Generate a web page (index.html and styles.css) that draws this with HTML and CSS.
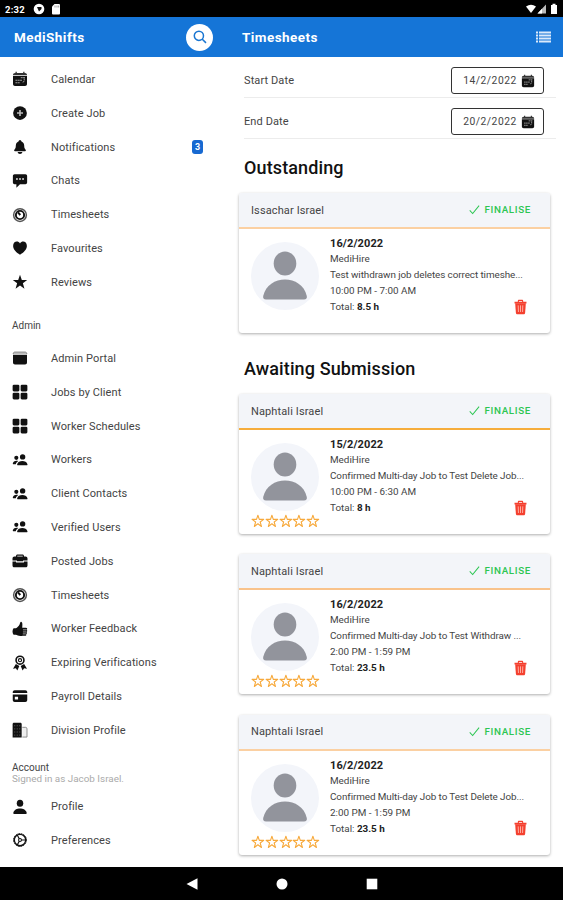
FILE: index.html
```
<!DOCTYPE html>
<html lang="en">
<head>
    <meta charset="utf-8">
    <title>MediShifts - Timesheets</title>
    <link rel="stylesheet" href="styles.css">
</head>
<body>

<!-- Shared icons -->
<svg class="sprite" viewBox="0 0 512 512">
    <symbol id="calendar" viewBox="0 0 512 512">
        <path d="M112 24h42v36h204V24h42v36h16c36 0 64 26 64 60v16H32v-16c0-34 28-60 64-60h16z" fill="#333"/>
        <path d="M32 156h448v260c0 36-28 64-64 64H96c-36 0-64-28-64-64z"/>
        <path d="M280 214h140M110 296h220M110 376h150M390 240v60q0 60-60 60" fill="none" stroke="#aaa" stroke-width="30" stroke-dasharray="62 12"/>
    </symbol>
    <symbol id="add" viewBox="0 0 512 512">
        <circle cx="256" cy="256" r="220"/>
        <path d="M256 160v192M160 256h192" stroke="#bbb" stroke-width="52"/>
    </symbol>
    <symbol id="bell" viewBox="0 0 512 512">
        <path d="M440 350c-30-36-50-54-50-140 0-78-40-106-74-120-5-2-9-6-10-10-7-22-26-48-50-48s-43 26-50 48c-1 4-5 8-10 10-34 14-74 42-74 120 0 86-20 104-50 140-12 16-1 38 20 38h328c21 0 32-22 20-38zM180 416h152c-4 80-148 80-152 0z"/>
    </symbol>
    <symbol id="chat" viewBox="0 0 512 512">
        <path fill-rule="evenodd" d="M80 40h352c28 0 52 24 52 52v212c0 28-24 52-52 52H256L140 472V356H80c-28 0-52-24-52-52V92c0-28 24-52 52-52zm52 126v52h52v-52zm98 0v52h52v-52zm98 0v52h52v-52z"/>
    </symbol>
    <symbol id="timer" viewBox="0 0 512 512">
        <circle cx="256" cy="256" r="204" fill="#fff" stroke="#555" stroke-width="48"/>
        <circle cx="256" cy="256" r="132" fill="none" stroke="currentColor" stroke-width="62"/>
        <path d="M190 170l76 86" fill="none" stroke="currentColor" stroke-width="62"/>
    </symbol>
    <symbol id="heart" viewBox="0 0 512 512">
        <path d="M256 470C140 394 36 306 36 190 36 36 196 4 256 112 316 4 476 36 476 190c0 116-104 204-220 280z"/>
    </symbol>
    <symbol id="star" viewBox="0 0 512 512">
        <path d="m256 20 58 168h172L348 292l50 176-142-104-142 104 50-176L26 188h172z"/>
    </symbol>
    <symbol id="star-outline" viewBox="0 0 512 512">
        <path d="m256 44 52 152h164L340 294l48 164-132-98-132 98 48-164L40 196h164z" fill="none" stroke="currentColor" stroke-width="40" stroke-linejoin="round"/>
    </symbol>
    <symbol id="browser" viewBox="0 0 512 512">
        <path d="M32 130c0-42 28-70 66-70h316c38 0 66 28 66 70z" fill="#bbb"/>
        <path d="M32 150h448v250c0 36-28 64-64 64H96c-36 0-64-28-64-64z"/>
        <path d="M36 128c0-38 26-66 62-66h316c36 0 62 28 62 66" fill="none" stroke="#444" stroke-width="16"/>
    </symbol>
    <symbol id="grid" viewBox="0 0 512 512">
        <rect x="20" y="20" width="216" height="216" rx="42"/>
        <rect x="276" y="20" width="216" height="216" rx="42"/>
        <rect x="20" y="276" width="216" height="216" rx="42"/>
        <rect x="276" y="276" width="216" height="216" rx="42"/>
    </symbol>
    <symbol id="people" viewBox="0 0 512 512">
        <circle cx="340" cy="156" r="86"/>
        <circle cx="138" cy="186" r="66"/>
        <path d="M188 424c-18 0-28-16-22-34 32-140 296-140 328 0 6 18-4 34-22 34zM24 376c10-84 92-118 178-88-44 26-70 60-80 104H38c-10 0-16-8-14-16z"/>
    </symbol>
    <symbol id="briefcase" viewBox="0 0 512 512">
        <path d="M16 238v-62c0-36 28-62 62-62h50V96c0-28 22-48 48-48h160c26 0 48 20 48 48v18h50c34 0 62 26 62 62v62H352v28H160v-28zM168 114h176V90H168z" fill-rule="evenodd"/>
        <path d="M16 268h114v34h252v-34h114v128c0 36-28 62-62 62H78c-34 0-62-26-62-62z"/>
    </symbol>
    <symbol id="thumb" viewBox="0 0 512 512">
        <path d="M290 20c-32 0-30 48-48 88-26 58-82 96-118 124H50c-44 50-44 150 0 210h68c50 14 80 36 150 36h60V210c6-64 16-190-38-190z"/>
        <path d="M296 216h142c62 0 62 62 18 66 46 8 42 66 0 68 36 8 30 60-6 62 22 20 4 60-34 60H296"/>
        <path d="M350 282h110M350 350h100M346 412h96" stroke="#bbb" stroke-width="26"/>
    </symbol>
    <symbol id="ribbon" viewBox="0 0 512 512">
        <circle cx="256" cy="166" r="126" fill="none" stroke="currentColor" stroke-width="52"/>
        <circle cx="256" cy="166" r="50" fill="none" stroke="currentColor" stroke-width="36"/>
        <path d="m124 286 110 64-62 142-48-70-92 14zM388 286l-110 64 62 142 48-70 92 14z"/>
    </symbol>
    <symbol id="card" viewBox="0 0 512 512">
        <path d="M24 160v-30c0-36 26-62 62-62h340c36 0 62 26 62 62v30z"/>
        <path fill-rule="evenodd" d="M24 208h464v178c0 36-26 62-62 62H86c-36 0-62-26-62-62zm66 70v88h104v-88z"/>
    </symbol>
    <symbol id="building" viewBox="0 0 512 512">
        <path d="M330 170h104c26 0 46 20 46 46v266H330" fill="#eee" stroke="#777" stroke-width="26"/>
        <path d="M20 492V62c0-24 18-42 42-42h206c24 0 42 18 42 42v430z"/>
        <path d="M70 120h196M70 220h196M70 320h196M70 420h196" stroke="#777" stroke-width="24" stroke-dasharray="34 46"/>
    </symbol>
    <symbol id="person" viewBox="0 0 512 512">
        <ellipse cx="256" cy="136" rx="104" ry="114"/>
        <path d="M76 480c-22 0-38-18-34-42 34-184 394-184 428 0 4 24-12 42-34 42z"/>
    </symbol>
    <symbol id="cog" viewBox="0 0 512 512">
        <circle cx="256" cy="256" r="182" fill="none" stroke="currentColor" stroke-width="44"/>
        <circle cx="256" cy="256" r="206" fill="none" stroke="currentColor" stroke-width="30" stroke-dasharray="54 27"/>
        <path d="M256 256h180M256 256 166 98M256 256l-90 158" stroke="currentColor" stroke-width="38"/>
        <circle cx="256" cy="256" r="46" fill="#fff" stroke="currentColor" stroke-width="34"/>
    </symbol>
    <symbol id="trash" viewBox="0 0 512 512">
        <path d="M52 78h112V50c0-26 16-42 42-42h100c26 0 42 16 42 42v28h112v62H52zM202 78h108V48H202z" fill-rule="evenodd"/>
        <path d="M74 130h364l-24 322c-3 32-24 54-56 54H154c-32 0-53-22-56-54z"/>
        <path d="m178 200 8 226M256 200v226M334 200l-8 226" stroke="#ffb3a8" stroke-width="32"/>
    </symbol>
    <symbol id="check" viewBox="0 0 12 12">
        <path d="M.8 7 4 10.400 11 1.800" fill="none" stroke="currentColor" stroke-width="1.100"/>
    </symbol>
    <symbol id="avatar" viewBox="0 0 68 68">
        <circle cx="34" cy="34" r="34" fill="#f3f5fa"/>
        <ellipse cx="34" cy="21.500" rx="11.300" ry="12" fill="#92949c"/>
        <path d="M15 57.500c-2.300 0-3.200-1.500-2.800-3.500C17 32 51 32 55.800 54c.4 2-.5 3.500-2.800 3.500z" fill="#92949c"/>
    </symbol>
</svg>

<div class="status-bar">
    <span class="clock">2:32</span>
    <svg class="status-app" viewBox="0 0 12 12"><circle cx="6" cy="6" r="5.300" fill="#fff"/><path d="M4 4h4.500v2L6 8.500z" fill="#111"/></svg>
    <svg class="status-sd" viewBox="0 0 10 12"><path d="M3.500 1H8q1 0 1 1v8.500q0 1-1 1H2q-1 0-1-1v-7z" fill="#fff"/><path d="M4 2.500v2M6 2.500v2M7.700 2.500v2" stroke="#777" stroke-width=".7"/></svg>
    <svg class="status-right" viewBox="0 0 34 12">
        <path d="M1 3.500Q6 0 11 3.500L6 10z" fill="#fff"/>
        <path d="M12.500 10.500 21 1.500v9z" fill="#bbb"/>
        <path d="M12.500 10.500 17 5.800v4.700z" fill="#fff"/>
        <path d="M26 2h1.500V.8h3V2H32v9h-6z" fill="#fff"/>
    </svg>
</div>

<div class="app">
    <div class="sidebar">
        <div class="header">
            <h1>MediShifts</h1>
            <div class="search">
                <svg viewBox="0 0 14 14"><path d="M5.900 1.200a4.600 4.600 0 1 0 0 9.200 4.600 4.600 0 0 0 0-9.200M9.300 9.200l3.700 3.700" fill="none" stroke="#1976d2" stroke-width="1.500"/></svg>
            </div>
        </div>

        <div class="menu">
            <div class="menu-item"><svg class="icon"><use href="#calendar"/></svg>Calendar</div>
            <div class="menu-item"><svg class="icon"><use href="#add"/></svg>Create Job</div>
            <div class="menu-item"><svg class="icon"><use href="#bell"/></svg>Notifications<span class="badge">3</span></div>
            <div class="menu-item"><svg class="icon"><use href="#chat"/></svg>Chats</div>
            <div class="menu-item"><svg class="icon"><use href="#timer"/></svg>Timesheets</div>
            <div class="menu-item"><svg class="icon"><use href="#heart"/></svg>Favourites</div>
            <div class="menu-item"><svg class="icon"><use href="#star"/></svg>Reviews</div>
        </div>

        <div class="menu-label">Admin</div>
        <div class="menu">
            <div class="menu-item"><svg class="icon"><use href="#browser"/></svg>Admin Portal</div>
            <div class="menu-item"><svg class="icon"><use href="#grid"/></svg>Jobs by Client</div>
            <div class="menu-item"><svg class="icon"><use href="#grid"/></svg>Worker Schedules</div>
            <div class="menu-item"><svg class="icon"><use href="#people"/></svg>Workers</div>
            <div class="menu-item"><svg class="icon"><use href="#people"/></svg>Client Contacts</div>
            <div class="menu-item"><svg class="icon"><use href="#people"/></svg>Verified Users</div>
            <div class="menu-item"><svg class="icon"><use href="#briefcase"/></svg>Posted Jobs</div>
            <div class="menu-item"><svg class="icon"><use href="#timer"/></svg>Timesheets</div>
            <div class="menu-item"><svg class="icon"><use href="#thumb"/></svg>Worker Feedback</div>
            <div class="menu-item"><svg class="icon"><use href="#ribbon"/></svg>Expiring Verifications</div>
            <div class="menu-item"><svg class="icon"><use href="#card"/></svg>Payroll Details</div>
            <div class="menu-item"><svg class="icon"><use href="#building"/></svg>Division Profile</div>
        </div>

        <div class="menu-label account">Account<span class="signed-in">Signed in as Jacob Israel.</span></div>
        <div class="menu">
            <div class="menu-item"><svg class="icon"><use href="#person"/></svg>Profile</div>
            <div class="menu-item"><svg class="icon"><use href="#cog"/></svg>Preferences</div>
        </div>
    </div>

    <div class="content">
        <div class="header">
            <h1>Timesheets</h1>
            <svg class="list-icon" viewBox="0 0 15 12"><path d="M0 1.500h2M3 1.500H15M0 4.500h2M3 4.500H15M0 7.500h2M3 7.500H15M0 10.500h2M3 10.500H15" stroke="#dbeafb" stroke-width="2"/></svg>
        </div>

        <div class="date-row">
            <span>Start Date</span>
            <div class="date-button">14/2/2022<svg class="icon"><use href="#calendar"/></svg></div>
        </div>
        <div class="date-row">
            <span>End Date</span>
            <div class="date-button">20/2/2022<svg class="icon"><use href="#calendar"/></svg></div>
        </div>

        <h2>Outstanding</h2>
        <div class="card">
            <div class="card-header pale">
                <span class="worker">Issachar Israel</span>
                <span class="finalise"><svg><use href="#check"/></svg>FINALISE</span>
            </div>
            <div class="card-body">
                <div class="photo"><svg class="avatar"><use href="#avatar"/></svg></div>
                <div class="details">
                    <div class="date">16/2/2022</div>
                    <div class="client">MediHire</div>
                    <div class="job">Test withdrawn job deletes correct timeshe...</div>
                    <div>10:00 PM - 7:00 AM</div>
                    <div>Total: <b>8.5 h</b></div>
                </div>
                <svg class="trash"><use href="#trash"/></svg>
            </div>
        </div>

        <h2 class="awaiting">Awaiting Submission</h2>
        <div class="card">
            <div class="card-header strong">
                <span class="worker">Naphtali Israel</span>
                <span class="finalise"><svg><use href="#check"/></svg>FINALISE</span>
            </div>
            <div class="card-body">
                <div class="photo">
                    <svg class="avatar"><use href="#avatar"/></svg>
                    <div class="stars"><svg><use href="#star-outline"/></svg><svg><use href="#star-outline"/></svg><svg><use href="#star-outline"/></svg><svg><use href="#star-outline"/></svg><svg><use href="#star-outline"/></svg></div>
                </div>
                <div class="details">
                    <div class="date">15/2/2022</div>
                    <div class="client">MediHire</div>
                    <div class="job">Confirmed Multi-day Job to Test Delete Job...</div>
                    <div>10:00 PM - 6:30 AM</div>
                    <div>Total: <b>8 h</b></div>
                </div>
                <svg class="trash"><use href="#trash"/></svg>
            </div>
        </div>

        <div class="card">
            <div class="card-header">
                <span class="worker">Naphtali Israel</span>
                <span class="finalise"><svg><use href="#check"/></svg>FINALISE</span>
            </div>
            <div class="card-body">
                <div class="photo">
                    <svg class="avatar"><use href="#avatar"/></svg>
                    <div class="stars"><svg><use href="#star-outline"/></svg><svg><use href="#star-outline"/></svg><svg><use href="#star-outline"/></svg><svg><use href="#star-outline"/></svg><svg><use href="#star-outline"/></svg></div>
                </div>
                <div class="details">
                    <div class="date">16/2/2022</div>
                    <div class="client">MediHire</div>
                    <div class="job">Confirmed Multi-day Job to Test Withdraw ...</div>
                    <div>2:00 PM - 1:59 PM</div>
                    <div>Total: <b>23.5 h</b></div>
                </div>
                <svg class="trash"><use href="#trash"/></svg>
            </div>
        </div>

        <div class="card">
            <div class="card-header pale">
                <span class="worker">Naphtali Israel</span>
                <span class="finalise"><svg><use href="#check"/></svg>FINALISE</span>
            </div>
            <div class="card-body">
                <div class="photo">
                    <svg class="avatar"><use href="#avatar"/></svg>
                    <div class="stars"><svg><use href="#star-outline"/></svg><svg><use href="#star-outline"/></svg><svg><use href="#star-outline"/></svg><svg><use href="#star-outline"/></svg><svg><use href="#star-outline"/></svg></div>
                </div>
                <div class="details">
                    <div class="date">16/2/2022</div>
                    <div class="client">MediHire</div>
                    <div class="job">Confirmed Multi-day Job to Test Delete Job...</div>
                    <div>2:00 PM - 1:59 PM</div>
                    <div>Total: <b>23.5 h</b></div>
                </div>
                <svg class="trash"><use href="#trash"/></svg>
            </div>
        </div>
    </div>
</div>

<!-- Android navigation buttons -->
<div class="nav-bar">
    <svg viewBox="0 0 12 12"><path d="M11.500.3v11.400L.5 6z"/></svg>
    <svg viewBox="0 0 12 12"><circle cx="6" cy="6" r="5.500"/></svg>
    <svg viewBox="0 0 12 12"><path d="M.7.7h10.600v10.600H.7z"/></svg>
</div>

</body>
</html>
```
FILE: styles.css
```
* {
    box-sizing: border-box;
}
body {
    margin: 0;
    height: 900px;
    display: flex;
    flex-direction: column;
    overflow: hidden;
    background: #fff;
    color: #444;
    font-family: Roboto, sans-serif;
    font-size: 11px;
}
svg {
    display: block;
    flex: none;
    fill: currentColor;
}
.sprite {
    display: none;
}
.status-bar {
    height: 17px;
    flex: none;
    display: flex;
    align-items: center;
    padding: 1px 4px 0 5px;
    background: #000;
    color: #fff;
}
.clock {
    width: 28px;
    font-size: 9.5px;
    font-weight: 700;
    letter-spacing: 0.2px;
}
.status-app {
    width: 12px;
    height: 12px;
}
.status-sd {
    width: 10px;
    height: 12px;
    margin-left: 6px;
}
.status-right {
    width: 34px;
    height: 12px;
    margin-left: auto;
}
.app {
    height: 850px;
    flex: none;
    display: flex;
    overflow: hidden;
}
.sidebar {
    width: 228px;
    flex: none;
}
.content {
    flex: 1;
    min-width: 0;
}
.header {
    height: 40px;
    display: flex;
    align-items: center;
    justify-content: space-between;
    padding: 0 15px 0 14px;
    background: #1575d7;
    color: #fff;
}
.content .header {
    padding-right: 12px;
}
h1 {
    margin: 0;
    font-size: 13.5px;
    font-weight: 700;
    letter-spacing: 0.45px;
}
.search {
    width: 27px;
    height: 27px;
    display: flex;
    align-items: center;
    justify-content: center;
    border-radius: 50%;
    background: #fff;
}
.search svg {
    width: 14px;
    height: 14px;
}
.list-icon {
    width: 15px;
    height: 12px;
}

/* Sidebar */
.menu-item {
    height: 33.8px;
    display: flex;
    align-items: center;
    gap: 23px;
    padding: 0 25px 0 12px;
    letter-spacing: 0.1px;
}
.header + .menu {
    padding-top: 5.6px;
}
.icon {
    width: 16px;
    height: 16px;
    color: #111;
}
.badge {
    width: 11px;
    height: 14px;
    margin-left: auto;
    border-radius: 3px;
    background: #1769d1;
    color: #fff;
    font-size: 9px;
    font-weight: 700;
    line-height: 14px;
    text-align: center;
    letter-spacing: 0;
}
.menu-label {
    height: 42.4px;
    padding: 19.4px 0 0 12px;
    font-size: 10px;
    line-height: 13px;
}
.menu-label.account {
    height: 42.5px;
    padding-top: 15px;
    line-height: 11px;
}
.signed-in {
    display: block;
    color: #aaa;
    font-size: 9.9px;
}

/* Timesheets */
.date-row {
    height: 41px;
    display: flex;
    align-items: center;
    justify-content: space-between;
    margin: 0 7px 0 16px;
    padding: 7px 12px 0 0;
    border-bottom: 1px solid #ececec;
}
.date-row span {
    letter-spacing: 0.1px;
}
.date-button {
    width: 93px;
    height: 27px;
    display: flex;
    align-items: center;
    justify-content: center;
    gap: 4px;
    padding-left: 3px;
    border: 1.5px solid #333;
    border-radius: 3px;
    font-size: 10.3px;
    letter-spacing: 0.5px;
}
.date-button .icon {
    width: 14px;
    height: 14px;
}
h2 {
    height: 54px;
    margin: 0 0 0 16px;
    padding-top: 14.5px;
    color: #111;
    font-size: 18px;
    font-weight: 500;
    line-height: 27px;
    letter-spacing: 0.12px;
}
h2.awaiting {
    height: 61px;
    padding-top: 22px;
}
.card {
    height: 140px;
    margin: 0 13px 20.3px 11px;
    border-radius: 3px;
    background: #fff;
    box-shadow: 0 1px 3px rgba(0, 0, 0, 0.32);
    overflow: hidden;
}
.card:has(+ h2) {
    margin-bottom: 0;
}
.card-header {
    height: 36px;
    display: flex;
    align-items: center;
    justify-content: space-between;
    padding: 0 19px 0 12px;
    border-bottom: 2px solid #f9c38b;
    background: #f3f5f9;
}
.card-header.strong {
    border-bottom-color: #f6ad3c;
}
.card-header.pale {
    border-bottom-color: #fbd0a2;
}
.worker {
    letter-spacing: 0.12px;
}
.finalise {
    display: flex;
    gap: 5px;
    align-items: center;
    padding-bottom: 1px;
    color: #2dc653;
    font-size: 9.8px;
    font-weight: 500;
    letter-spacing: 0.65px;
}
.finalise svg {
    width: 11px;
    height: 11px;
}
.card-body {
    display: flex;
    padding: 6px 22px 0 12px;
}
.photo {
    width: 79px;
    flex: none;
    padding-top: 7px;
}
.avatar {
    width: 68px;
    height: 68px;
}
.stars {
    display: flex;
    color: #f7a93b;
    margin-top: 3px;
}
.stars svg {
    width: 13.8px;
    height: 14px;
}
.details {
    flex: 1;
    min-width: 0;
    padding-top: 1px;
    font-size: 9.9px;
    line-height: 16px;
    white-space: nowrap;
}
.details b {
    color: #222;
}
.date {
    color: #222;
    font-size: 11px;
    font-weight: 700;
    letter-spacing: 0.1px;
}
.client {
    line-height: 14px;
    margin-bottom: 1px;
}
.job {
    letter-spacing: -0.08px;
}
.trash {
    width: 15px;
    height: 16px;
    margin-top: 63.500px;
    color: #f4402f;
}

.nav-bar {
    height: 33px;
    flex: none;
    display: flex;
    align-items: center;
    justify-content: center;
    gap: 78px;
    background: #000;
    color: #fff;
}
.nav-bar svg {
    width: 12px;
    height: 12px;
}
```
